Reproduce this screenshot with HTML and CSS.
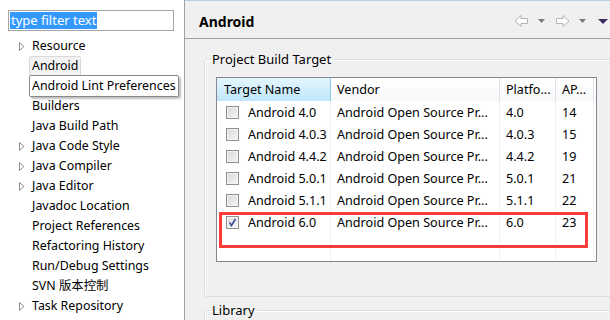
FILE: index.html
```html
<!DOCTYPE html>
<html lang="en">
<head>
    <meta charset="UTF-8">
    <title>Properties for project - Android</title>
    <link rel="stylesheet" href="styles.css">
</head>
<body>
    <div class="window">
        <aside class="sidebar">
            <div class="filter"><span class="filter-sel">type filter text</span></div>
            <ul class="tree">
                <li><span class="twisty"><svg width="6" height="9" viewBox="0 0 6 9"><polygon points="0.5,0.5 5,4.5 0.5,8.5" fill="#fff" stroke="#8c8c8c"/></svg></span><span class="label">Resource</span></li>
                <li><span class="twisty"></span><span class="label selected">Android</span></li>
                <li><span class="twisty"></span><span class="label hovered">Android Lint Preferences</span></li>
                <li><span class="twisty"></span><span class="label">Builders</span></li>
                <li><span class="twisty"></span><span class="label">Java Build Path</span></li>
                <li><span class="twisty"><svg width="6" height="9" viewBox="0 0 6 9"><polygon points="0.5,0.5 5,4.5 0.5,8.5" fill="#fff" stroke="#8c8c8c"/></svg></span><span class="label">Java Code Style</span></li>
                <li><span class="twisty"><svg width="6" height="9" viewBox="0 0 6 9"><polygon points="0.5,0.5 5,4.5 0.5,8.5" fill="#fff" stroke="#8c8c8c"/></svg></span><span class="label">Java Compiler</span></li>
                <li><span class="twisty"><svg width="6" height="9" viewBox="0 0 6 9"><polygon points="0.5,0.5 5,4.5 0.5,8.5" fill="#fff" stroke="#8c8c8c"/></svg></span><span class="label">Java Editor</span></li>
                <li><span class="twisty"></span><span class="label">Javadoc Location</span></li>
                <li><span class="twisty"></span><span class="label">Project References</span></li>
                <li><span class="twisty"></span><span class="label">Refactoring History</span></li>
                <li><span class="twisty"></span><span class="label">Run/Debug Settings</span></li>
                <li><span class="twisty"></span><span class="label">SVN 版本控制</span></li>
                <li><span class="twisty"><svg width="6" height="9" viewBox="0 0 6 9"><polygon points="0.5,0.5 5,4.5 0.5,8.5" fill="#fff" stroke="#8c8c8c"/></svg></span><span class="label">Task Repository</span></li>
            </ul>
        </aside>

        <main class="page">
            <div class="page-head">
                <h1>Android</h1>
                <div class="nav">
                    <svg width="15" height="14" viewBox="0 0 15 14"><path d="M1 7 L7 1.5 L7 4.5 L13.5 4.5 L13.5 9.5 L7 9.5 L7 12.5 Z" fill="#fff" stroke="#b3b3b3" stroke-linejoin="round"/></svg>
                    <svg class="drop" width="7" height="4" viewBox="0 0 7 4"><polygon points="0,0 7,0 3.5,4" fill="#7a7a7a"/></svg>
                    <svg width="15" height="14" viewBox="0 0 15 14"><path d="M14 7 L8 1.5 L8 4.5 L1.5 4.5 L1.5 9.5 L8 9.5 L8 12.5 Z" fill="#fff" stroke="#b3b3b3" stroke-linejoin="round"/></svg>
                    <svg class="drop" width="7" height="4" viewBox="0 0 7 4"><polygon points="0,0 7,0 3.5,4" fill="#7a7a7a"/></svg>
                    <svg class="menu" width="10" height="5" viewBox="0 0 10 5"><polygon points="0,0 10,0 5,5" fill="#3d2c66"/></svg>
                </div>
            </div>

            <div class="page-body">
                <fieldset class="group">
                    <legend>Project Build Target</legend>
                    <div class="targets">
                        <div class="row head">
                            <div class="cell sorted">Target Name</div>
                            <div class="cell">Vendor</div>
                            <div class="cell">Platfo...</div>
                            <div class="cell">AP...</div>
                            <div class="cell"></div>
                        </div>
                        <div class="row">
                            <div class="cell"><span class="check"></span>Android 4.0</div>
                            <div class="cell">Android Open Source Pr...</div>
                            <div class="cell">4.0</div>
                            <div class="cell">14</div>
                            <div class="cell"></div>
                        </div>
                        <div class="row">
                            <div class="cell"><span class="check"></span>Android 4.0.3</div>
                            <div class="cell">Android Open Source Pr...</div>
                            <div class="cell">4.0.3</div>
                            <div class="cell">15</div>
                            <div class="cell"></div>
                        </div>
                        <div class="row">
                            <div class="cell"><span class="check"></span>Android 4.4.2</div>
                            <div class="cell">Android Open Source Pr...</div>
                            <div class="cell">4.4.2</div>
                            <div class="cell">19</div>
                            <div class="cell"></div>
                        </div>
                        <div class="row">
                            <div class="cell"><span class="check"></span>Android 5.0.1</div>
                            <div class="cell">Android Open Source Pr...</div>
                            <div class="cell">5.0.1</div>
                            <div class="cell">21</div>
                            <div class="cell"></div>
                        </div>
                        <div class="row">
                            <div class="cell"><span class="check"></span>Android 5.1.1</div>
                            <div class="cell">Android Open Source Pr...</div>
                            <div class="cell">5.1.1</div>
                            <div class="cell">22</div>
                            <div class="cell"></div>
                        </div>
                        <div class="row">
                            <div class="cell"><span class="check checked"><svg width="9" height="9" viewBox="0 0 9 9"><path d="M1.5 4.5 L3.5 7.5 L7.5 1" fill="none" stroke="#3b4f92" stroke-width="1.6"/></svg></span>Android 6.0</div>
                            <div class="cell">Android Open Source Pr...</div>
                            <div class="cell">6.0</div>
                            <div class="cell">23</div>
                            <div class="cell"></div>
                        </div>
                        <div class="row filler">
                            <div class="cell"></div>
                            <div class="cell"></div>
                            <div class="cell"></div>
                            <div class="cell"></div>
                            <div class="cell"></div>
                        </div>
                        <!-- red annotation box drawn over the selected target -->
                        <div class="mark"></div>
                    </div>
                </fieldset>

                <fieldset class="group library">
                    <legend>Library</legend>
                </fieldset>
            </div>
        </main>
    </div>
</body>
</html>
```

FILE: styles.css
```css
body {
    margin: 0;
    font-family: "Noto Sans", "Noto Sans CJK SC", sans-serif;
    font-size: 12px;
    color: #000;
    background-color: #f0f0f0;
}

.window {
    display: flex;
    width: 610px;
    height: 320px;
    overflow: hidden;
}

/* left tree */
.sidebar {
    width: 184px;
    flex-shrink: 0;
    background-color: #fff;
    border-right: 1px solid #a0a0a0;
}

.filter {
    margin: 10px 0 0 8px;
    border: 1px solid #a5a5a5;
    padding: 1px 0 0 1px;
    box-sizing: border-box;
    width: 166px;
    height: 21px;
}

.filter-sel {
    display: inline-block;
    background-color: #3399ff;
    color: #fff;
    line-height: 17px;
    padding: 0 1px;
    font-size: 13px;
}

.tree {
    list-style: none;
    margin: 5px 0 0 0;
    padding: 0;
    font-size: 12.4px;
}

.tree li {
    display: flex;
    align-items: center;
    height: 20px;
}

.twisty {
    width: 29px;
    flex-shrink: 0;
    display: flex;
    align-items: center;
}

.twisty svg {
    margin-left: 19px;
}

.label {
    line-height: 16px;
    padding: 1px 2px;
    border: 1px solid transparent;
    border-radius: 2px;
    white-space: nowrap;
}

.label.selected {
    background-color: #f2f2f2;
    border-color: #d9d9d9;
}

.label.hovered {
    background-color: #fff;
    border-color: #8a8a8a;
    padding: 2px 2px;
    box-shadow: 2px 2px 2px rgba(0, 0, 0, 0.25);
}

/* right page */
.page {
    flex: 1;
    border-top: 1px solid #b9cde5;
    min-width: 0;
}

.page-head {
    display: flex;
    align-items: center;
    justify-content: space-between;
    height: 37px;
    border-bottom: 1px solid #a0a0a0;
    padding: 0 2px 0 14px;
}

.page-head h1 {
    margin: 0;
    font-size: 14px;
    font-weight: bold;
    padding-top: 3px;
}

.nav {
    display: flex;
    align-items: center;
    padding-top: 3px;
}

.nav .drop {
    margin: 0 10px 0 9px;
}

.nav .menu {
    margin-left: 2px;
}

.page-body {
    padding: 12px 0 0 19px;
}

.group {
    margin: 0 -10px 0 0;
    padding: 0 0 34px 0;
    border: 1px solid #d5dfe5;
    border-radius: 3px;
    box-shadow: inset 1px 1px 0 #fff;
}

.group legend {
    margin-left: 5px;
    padding: 0 2px;
    line-height: 16px;
    font-size: 13px;
}

.library {
    margin-top: 5px;
    padding-bottom: 20px;
}

/* target table */
.targets {
    position: relative;
    display: flex;
    flex-direction: column;
    width: 381px;
    height: 185px;
    margin: 10px 0 0 11px;
    border: 1px solid #828790;
    background-color: #fff;
    box-sizing: border-box;
}

.row {
    display: grid;
    grid-template-columns: 114px 169px 56px 38px 1fr;
    height: 22px;
}

.row .cell {
    display: flex;
    align-items: center;
    padding-left: 6px;
    border-right: 1px solid #edf1f6;
    white-space: nowrap;
    overflow: hidden;
    font-size: 12.6px;
}

.row .cell:first-child {
    padding-left: 9px;
}

.row .cell:last-child {
    border-right: none;
}

.row.head {
    height: 23px;
    background: linear-gradient(#ffffff, #f7f8fa);
}

.row.head .cell {
    border-right-color: #dfe2e6;
}

.row.head .cell:first-child {
    padding-left: 7px;
}

.row.head .cell.sorted {
    background: linear-gradient(#e4f6fd, #bfe6fb);
    border-right-color: #92cbea;
}

.row.filler {
    flex: 1;
}

.check {
    display: inline-flex;
    align-items: center;
    justify-content: center;
    width: 13px;
    height: 13px;
    box-sizing: border-box;
    border: 1px solid #8e8f8f;
    background: linear-gradient(135deg, #d7d7d7, #f6f6f6);
    box-shadow: inset 0 0 0 1px #f4f4f4;
    margin-right: 9px;
    flex-shrink: 0;
}

.check.checked {
    background: linear-gradient(135deg, #dcdcdc, #fafafa);
}

.mark {
    position: absolute;
    left: 2px;
    top: 134px;
    width: 369px;
    height: 36px;
    border: 3px solid #ff3b3b;
    box-sizing: border-box;
}
```
